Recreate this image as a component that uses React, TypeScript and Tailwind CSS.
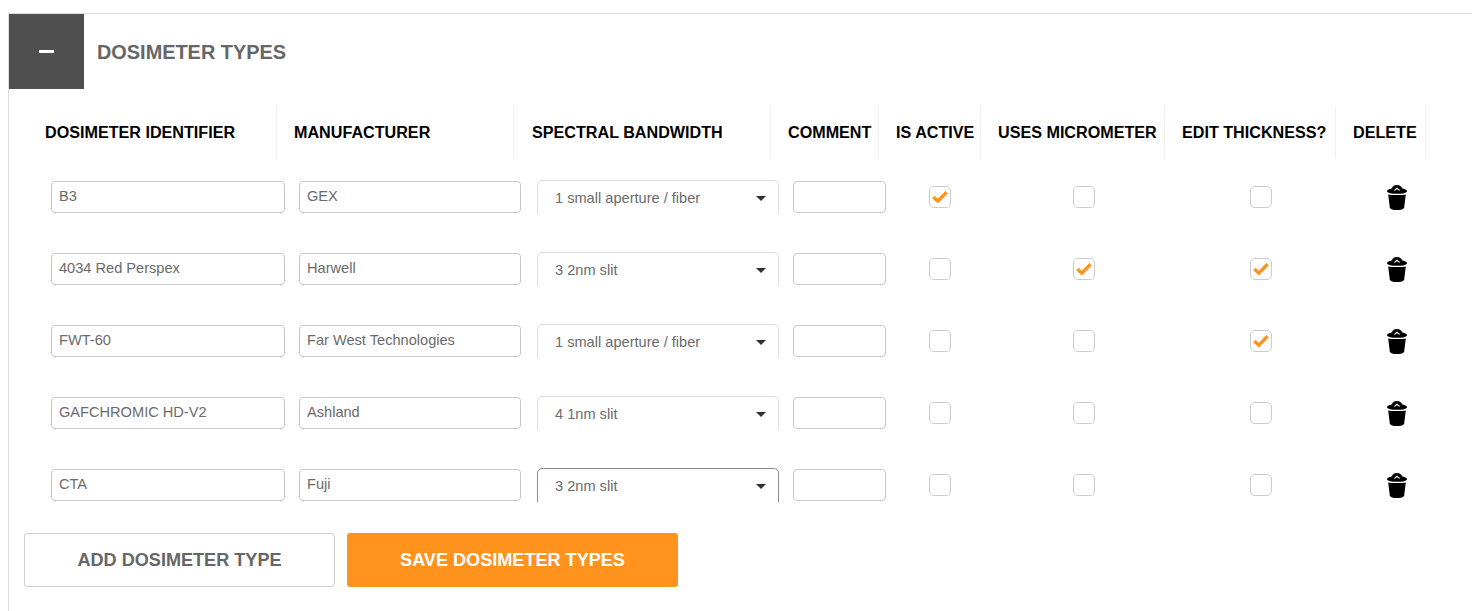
const font = "font-['Liberation_Sans',Arial,sans-serif]";

const columns = [
  { title: 'DOSIMETER IDENTIFIER', width: 'w-[249px] pl-[17px]' },
  { title: 'MANUFACTURER', width: 'w-[237px] pl-[17px]' },
  { title: 'SPECTRAL BANDWIDTH', width: 'w-[257px] pl-[18px]' },
  { title: 'COMMENT', width: 'w-[108px] pl-[17px]' },
  { title: 'IS ACTIVE', width: 'w-[102px] pl-[17px]' },
  { title: 'USES MICROMETER', width: 'w-[184px] pl-[17px]' },
  { title: 'EDIT THICKNESS?', width: 'w-[171px] pl-[17px]' },
  { title: 'DELETE', width: 'w-[90px] pl-[17px]' },
];

const rows = [
  { id: 'B3', maker: 'GEX', band: '1 small aperture / fiber', active: true, micro: false, thick: false },
  { id: '4034 Red Perspex', maker: 'Harwell', band: '3 2nm slit', active: false, micro: true, thick: true },
  { id: 'FWT-60', maker: 'Far West Technologies', band: '1 small aperture / fiber', active: false, micro: false, thick: true },
  { id: 'GAFCHROMIC HD-V2', maker: 'Ashland', band: '4 1nm slit', active: false, micro: false, thick: false },
  { id: 'CTA', maker: 'Fuji', band: '3 2nm slit', active: false, micro: false, thick: false, focused: true },
];

function TextBox({ value, className }: { value: string; className: string }) {
  return (
    <input
      readOnly
      defaultValue={value}
      className={`h-[32px] rounded-[4px] border border-[#c8c8c8] bg-white px-[7px] pb-[3px] text-[14.6px] text-[#6b6b6b] outline-none ${className}`}
    />
  );
}

function Check({ on, className }: { on: boolean; className: string }) {
  return (
    <div className={`flex h-[22px] w-[22px] shrink-0 items-center justify-center rounded-[5px] border border-[#cccccc] bg-white ${className}`}>
      {on && (
        <svg width="16" height="14" viewBox="0 0 16 14">
          <path d="M1.4 7 L5.8 11.2 L14.6 2.2" fill="none" stroke="#ff931e" strokeWidth="3.4" />
        </svg>
      )}
    </div>
  );
}

function BandSelect({ value, focused }: { value: string; focused?: boolean }) {
  return (
    <div className="ml-[23px] h-[34px] w-[242px] shrink-0 overflow-hidden">
      <div className={`flex h-[42px] items-start justify-between rounded-[5px] border bg-white pl-[17px] pr-[12px] pt-[7px] text-[14.6px] text-[#6b6b6b] ${focused ? 'border-[#8c8c8c]' : 'border-[#dedede]'}`}>
        <span>{value}</span>
        <span className="mt-[8px] h-0 w-0 border-x-[5px] border-t-[5px] border-x-transparent border-t-[#333333]" />
      </div>
    </div>
  );
}

function TrashIcon() {
  return (
    <svg width="20" height="25" viewBox="0 0 20 25" className="ml-[50px] shrink-0">
      <path
        fillRule="evenodd"
        d="M10 0 C7 0 5.4 1.6 4.6 3.6 C2.4 4.2 0 5 0 6.2 C0 7.8 4.6 8.8 10 8.8 C15.4 8.8 20 7.8 20 6.2 C20 5 17.6 4.2 15.4 3.6 C14.6 1.6 13 0 10 0 Z M10 2.6 L13.4 5.4 L11.9 5.6 L10 4.2 L8.1 5.6 L6.6 5.4 Z"
        fill="#000"
      />
      <path d="M1.2 9.4 C4 10.3 16 10.3 18.8 9.4 L17.2 22.4 C17 24 14 25 10 25 C6 25 3 24 2.8 22.4 Z" fill="#000" />
    </svg>
  );
}

export default function App() {
  return (
    <div className={`h-[611px] overflow-hidden bg-white pl-[8px] pt-[13px] ${font}`}>
      <div className="h-[600px] border-l border-t border-[#dddddd]">
        <div className="flex h-[75px] items-center">
          <div className="flex h-[75px] w-[75px] items-center justify-center bg-[#4f4f4f]">
            <div className="h-[3px] w-[15px] bg-white" />
          </div>
          <h2 className="ml-[13px] pt-[3px] text-[19.9px] font-bold text-[#666666]">DOSIMETER TYPES</h2>
        </div>

        <div className="pl-[19px] pt-[18px]">
          <div className="flex h-[51px]">
            {columns.map((col) => (
              <div
                key={col.title}
                className={`flex items-center whitespace-nowrap border-r border-[#f0f0f0] text-[16.15px] font-bold text-black ${col.width}`}
              >
                {col.title}
              </div>
            ))}
          </div>

          <div className="mt-[3px]">
            {rows.map((row) => (
              <div key={row.id} className="flex h-[72px] items-center">
                <TextBox value={row.id} className="ml-[23px] w-[234px]" />
                <TextBox value={row.maker} className="ml-[14px] w-[222px]" />
                <div className="ml-[-7px] flex items-center">
                  <BandSelect value={row.band} focused={row.focused} />
                </div>
                <TextBox value="" className="ml-[14px] w-[93px]" />
                <Check on={row.active} className="ml-[43px]" />
                <Check on={row.micro} className="ml-[122px]" />
                <Check on={row.thick} className="ml-[155px]" />
                <div className="ml-[65px] flex items-center">
                  <TrashIcon />
                </div>
              </div>
            ))}
          </div>
        </div>

        <div className="mt-[12px] flex gap-[12px] pl-[15px]">
          <button className="h-[54px] w-[311px] rounded-[3px] border border-[#cfcfcf] bg-white pt-[1px] text-[18.1px] font-bold text-[#666666]">
            ADD DOSIMETER TYPE
          </button>
          <button className="h-[54px] w-[331px] rounded-[3px] bg-[#ff931e] pt-[1px] text-[18.1px] font-bold text-white">
            SAVE DOSIMETER TYPES
          </button>
        </div>
      </div>
    </div>
  );
}
